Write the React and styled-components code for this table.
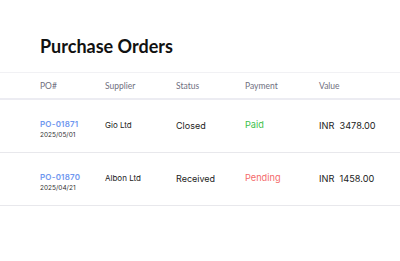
import React from 'react'
import styled, { createGlobalStyle } from 'styled-components'

const GlobalStyle = createGlobalStyle`
  body {
    margin: 0;
    background: #ffffff;
    font-family: Inter, "Noto Sans", sans-serif;
  }
`

const Page = styled.div`
  width: 400px;
  padding-top: 35px;
`

const Title = styled.h1`
  margin: 0 0 15px 40px;
  font-family: Lato, sans-serif;
  font-weight: 700;
  font-size: 18px;
  line-height: 22px;
  color: #111111;
`

const Grid = styled.div`
  display: grid;
  grid-template-columns: 65px 71px 69px 74px 1fr;
  padding-left: 40px;
  align-items: center;
`

const HeadRow = styled(Grid)`
  height: 25px;
  border-top: 1px solid #f1f1f4;
  border-bottom: 2px solid #ececf2;
`

const HeadCell = styled.div`
  font-family: Lato, sans-serif;
  font-size: 8.5px;
  color: #6f6f80;
`

const Row = styled(Grid)`
  height: 52px;
  border-bottom: 1px solid #e8e8ec;
`

const PoCell = styled.div`
  display: flex;
  flex-direction: column;
  gap: 2px;
  margin-top: 5px;
`

const PoNumber = styled.span`
  font-size: 8px;
  font-weight: 600;
  color: #6f97ef;
  letter-spacing: 0.2px;
`

const PoDate = styled.span`
  font-size: 6.5px;
  color: #333333;
`

const Cell = styled.div`
  font-size: ${p => p.$size || 8}px;
  color: ${p => p.$color || '#222222'};
  margin-top: ${p => p.$lift ? -3 : -1}px;
`

const orders = [
  { po: 'PO-01871', date: '2025/05/01', supplier: 'Gio Ltd', status: 'Closed', payment: 'Paid', value: '3478.00' },
  { po: 'PO-01870', date: '2025/04/21', supplier: 'Albon Ltd', status: 'Received', payment: 'Pending', value: '1458.00' },
]

const paymentColor = {
  Paid: '#3cbf4a',
  Pending: '#f46a6a',
}

export default function App() {
  return (
    <Page>
      <GlobalStyle />
      <Title>Purchase Orders</Title>
      <HeadRow>
        <HeadCell>PO#</HeadCell>
        <HeadCell>Supplier</HeadCell>
        <HeadCell>Status</HeadCell>
        <HeadCell>Payment</HeadCell>
        <HeadCell>Value</HeadCell>
      </HeadRow>
      {orders.map(o => (
        <Row key={o.po}>
          <PoCell>
            <PoNumber>{o.po}</PoNumber>
            <PoDate>{o.date}</PoDate>
          </PoCell>
          <Cell $lift>{o.supplier}</Cell>
          <Cell $size={9}>{o.status}</Cell>
          <Cell $lift $size={9.2} $color={paymentColor[o.payment]}>{o.payment}</Cell>
          <Cell $size={9.2}>INR&nbsp;&nbsp;{o.value}</Cell>
        </Row>
      ))}
    </Page>
  )
}
